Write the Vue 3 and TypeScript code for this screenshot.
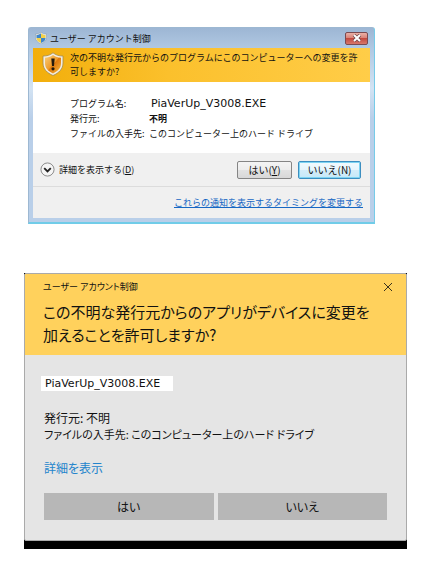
<script setup lang="ts">
interface Detail {
  label: string
  value: string
  kind: 'file' | 'strong' | 'plain'
}

const fileName = 'PiaVerUp_V3008.EXE'
const details: Detail[] = [
  { label: 'プログラム名:', value: fileName, kind: 'file' },
  { label: '発行元:', value: '不明', kind: 'strong' },
  { label: 'ファイルの入手先:', value: 'このコンピューター上のハード ドライブ', kind: 'plain' },
]
</script>

<template>
  <main class="page">
    <section class="classic" aria-labelledby="classic-title">
      <header class="classic-bar">
        <svg class="bar-shield" viewBox="0 0 24 24" aria-hidden="true">
          <path d="M12 0C9 3 6 4 1 4v7c0 6 4 10 11 13 7-3 11-7 11-13V4c-5 0-8-1-11-4Z" fill="#e4e9ec" stroke="#8696a4" />
          <path d="M12 2.500C9 5 7 6 3 6v6h9Z" fill="#3f86c9" />
          <path d="M12 2.500C15 5 17 6 21 6v6h-9Z" fill="#f3d149" />
          <path d="M3 12h9v10c-6-2-9-6-9-10Z" fill="#f3d149" />
          <path d="M21 12h-9v10c6-2 9-6 9-10Z" fill="#3f86c9" />
        </svg>
        <h1 id="classic-title" class="classic-title">ユーザー アカウント制御</h1>
        <button class="classic-close" type="button" aria-label="閉じる">
          <svg viewBox="0 0 10 8" aria-hidden="true">
            <path d="M2 1l6 6M8 1L2 7" stroke="#6e4648" stroke-width="3.4" />
            <path d="M2 1l6 6M8 1L2 7" stroke="#fff" stroke-width="2" />
          </svg>
        </button>
      </header>

      <div class="classic-inner">
        <div class="classic-banner">
          <svg class="banner-shield" viewBox="0 0 22 24" aria-hidden="true">
            <defs>
              <linearGradient id="shield-fill" x1="0" y1="0" x2="1" y2="1">
                <stop offset="0" stop-color="#fbd07c" />
                <stop offset="0.5" stop-color="#ee9a2a" />
                <stop offset="0.52" stop-color="#de780c" />
                <stop offset="1" stop-color="#f8bc40" />
              </linearGradient>
            </defs>
            <path d="M11 .8C8 3.200 5 4 1 4v7c0 6 4 10 10 12.500C17 21 21 17 21 11V4c-4 0-7-.8-10-3.200Z" fill="#f2eee2" stroke="#a3894a" stroke-width=".8" />
            <path d="M11 3C8.500 4.800 6 5.500 3 5.700V11c0 5 3 8.200 8 10.400 5-2.200 8-5.400 8-10.400V5.700C16 5.500 13.500 4.800 11 3Z" fill="url(#shield-fill)" />
            <path d="M9.300 6.500h3.400l-.7 7.500h-2Z" fill="#241a0c" />
            <circle cx="11" cy="16.800" r="1.600" fill="#241a0c" />
          </svg>
          <p>次の不明な発行元からのプログラムにこのコンピューターへの変更を許<br />可しますか?</p>
        </div>

        <dl class="details">
          <template v-for="row in details" :key="row.label">
            <dt>{{ row.label }}</dt>
            <dd :class="row.kind">{{ row.value }}</dd>
          </template>
        </dl>

        <div class="classic-actions">
          <button class="expander" type="button">
            <svg viewBox="0 0 16 16" aria-hidden="true">
              <circle cx="8" cy="8" r="7" fill="#f5f5f5" stroke="#858585" />
              <path d="M4.500 6.500 8 10l3.500-3.500" fill="none" stroke="#222" stroke-width="2" />
            </svg>
            <span>詳細を表示する(<u>D</u>)</span>
          </button>
          <button class="push yes" type="button">はい(<u>Y</u>)</button>
          <button class="push no" type="button">いいえ(N)</button>
        </div>

        <footer class="classic-foot">
          <a href="#notifications">これらの通知を表示するタイミングを変更する</a>
        </footer>
      </div>
    </section>

    <div class="backdrop">
      <section class="modern" aria-labelledby="modern-title">
        <header class="modern-head">
          <div class="modern-bar">
            <span>ユーザー アカウント制御</span>
            <button class="modern-close" type="button" aria-label="閉じる">
              <svg viewBox="0 0 10 10" aria-hidden="true">
                <path d="M1 1l8 8M9 1L1 9" stroke="#3a321c" stroke-width="1" />
              </svg>
            </button>
          </div>
          <h2 id="modern-title">この不明な発行元からのアプリがデバイスに変更を<br />加えることを許可しますか?</h2>
        </header>
        <div class="modern-body">
          <p class="chip">{{ fileName }}</p>
          <div class="source">
            <p class="publisher">発行元: 不明</p>
            <p>ファイルの入手先: このコンピューター上のハード ドライブ</p>
          </div>
          <a class="more" href="#details">詳細を表示</a>
          <div class="choices">
            <button type="button">はい</button>
            <button type="button">いいえ</button>
          </div>
        </div>
      </section>
    </div>
  </main>
</template>

<style>
body {
  background: #fff;
}
</style>

<style scoped>
.page {
  box-sizing: border-box;
  padding: 27px 35px 24px 24px;
  font-family: "Noto Sans CJK JP", sans-serif;
  color: #111;
}

h1, h2, p, dl, dd {
  margin: 0;
  font-weight: 400;
}

button {
  margin: 0;
  padding: 0;
  font: inherit;
  font-feature-settings: inherit;
  color: inherit;
}

svg {
  display: block;
}

.classic {
  margin: 0 32px 0 4px;
  padding: 0 4px 4px;
  border: 1px solid #9db8d2;
  border-right-color: #76cbe8;
  border-bottom: 2px solid #70cce8;
  border-radius: 3px 3px 0 0;
  background: linear-gradient(#9db6d4, #b0c8e2 20px, #d3e3f3 60px, #b9cfe9 90px);
  font-size: 9px;
  line-height: 15px;
}

.classic-bar {
  display: flex;
  align-items: center;
  height: 20px;
  padding: 0 2px;
}

.bar-shield {
  width: 12px;
  height: 12px;
}

.classic-title {
  flex: 1;
  margin-left: 3px;
  font-size: 9px;
}

.classic-close {
  display: grid;
  place-items: center;
  width: 23px;
  height: 13px;
  border: 1px solid #7b4a50;
  border-radius: 2px;
  background: linear-gradient(#eab0a6, #d98278 45%, #c34a40 50%, #d8776a);
}

.classic-close svg {
  width: 10px;
  height: 8px;
}

.classic-inner {
  background: #f0f0f0;
}

.classic-banner {
  display: flex;
  gap: 6px;
  height: 34px;
  padding-left: 9px;
  background: linear-gradient(90deg, #f2ae0b, #fbc02c 40%, #ffcd48);
  line-height: 14px;
}

.classic-banner p {
  padding-top: 3px;
  white-space: nowrap;
}

.banner-shield {
  flex: none;
  width: 22px;
  height: 24px;
  margin-top: 4px;
}

.details {
  display: grid;
  grid-template-columns: 79px 1fr;
  align-items: baseline;
  padding: 14px 0 12px 37px;
  background: #fff;
  white-space: nowrap;
}

.strong {
  font-weight: 700;
}

.file {
  padding-left: 2px;
  font-family: "DejaVu Sans", sans-serif;
  font-size: 11px;
}

.classic-actions {
  display: flex;
  align-items: center;
  gap: 6px;
  height: 33px;
  padding: 0 9px 0 7px;
  border-bottom: 1px solid #dcdcdc;
}

.expander {
  display: flex;
  align-items: center;
  gap: 4px;
  margin-right: auto;
  border: 0;
  background: none;
}

.expander svg {
  width: 15px;
  height: 15px;
}

.push {
  height: 18px;
  border: 1px solid #858585;
  border-radius: 2px;
  background: linear-gradient(#f4f4f4, #ededed 50%, #e2e2e2 51%, #d8d8d8);
  font-size: 10px;
  line-height: 16px;
}

.yes {
  width: 55px;
}

.no {
  width: 63px;
  border-color: #3c8ec0;
  background: linear-gradient(#f2fafe, #e6f5fc 50%, #d4edf9 51%, #c6e8f8);
  box-shadow: inset 0 0 0 1px #7ed4f2;
}

.classic-foot {
  display: flex;
  align-items: center;
  justify-content: flex-end;
  height: 31px;
  padding-right: 7px;
}

.classic-foot a {
  color: #1667c4;
}

.backdrop {
  margin-top: 49px;
  padding-bottom: 8px;
  background: #000;
}

.modern {
  overflow: hidden;
  border: 1px solid #aaa;
  border-radius: 2px;
  background: #e5e5e5;
  font-feature-settings: "palt";
}

.modern-head {
  height: 81px;
  padding: 0 11px 0 18px;
  box-sizing: border-box;
  background: #ffd15c;
}

.modern-bar {
  display: flex;
  align-items: center;
  justify-content: space-between;
  height: 25px;
  font-size: 9px;
}

.modern-close {
  padding: 2px;
  border: 0;
  background: none;
}

.modern-close svg {
  width: 10px;
  height: 10px;
}

.modern-head h2 {
  padding-top: 1px;
  font-size: 15px;
  line-height: 23px;
  white-space: nowrap;
}

.modern-body {
  padding: 21px 19px 20px;
}

.chip {
  width: 128px;
  margin-left: -3px;
  padding-left: 4px;
  background: #fff;
  font-family: "DejaVu Sans", sans-serif;
  font-size: 11px;
  line-height: 15px;
}

.source {
  margin-top: 19px;
  font-size: 11px;
  line-height: 16px;
  white-space: nowrap;
}

.publisher {
  font-size: 12px;
}

.more {
  display: block;
  margin-top: 17px;
  font-size: 12px;
  line-height: 18px;
  color: #2484cc;
  text-decoration: none;
}

.choices {
  display: grid;
  grid-template-columns: 1fr 1fr;
  gap: 4px;
  margin-top: 16px;
}

.choices button {
  height: 27px;
  border: 0;
  background: #b7b7b7;
  font-size: 12px;
}
</style>
